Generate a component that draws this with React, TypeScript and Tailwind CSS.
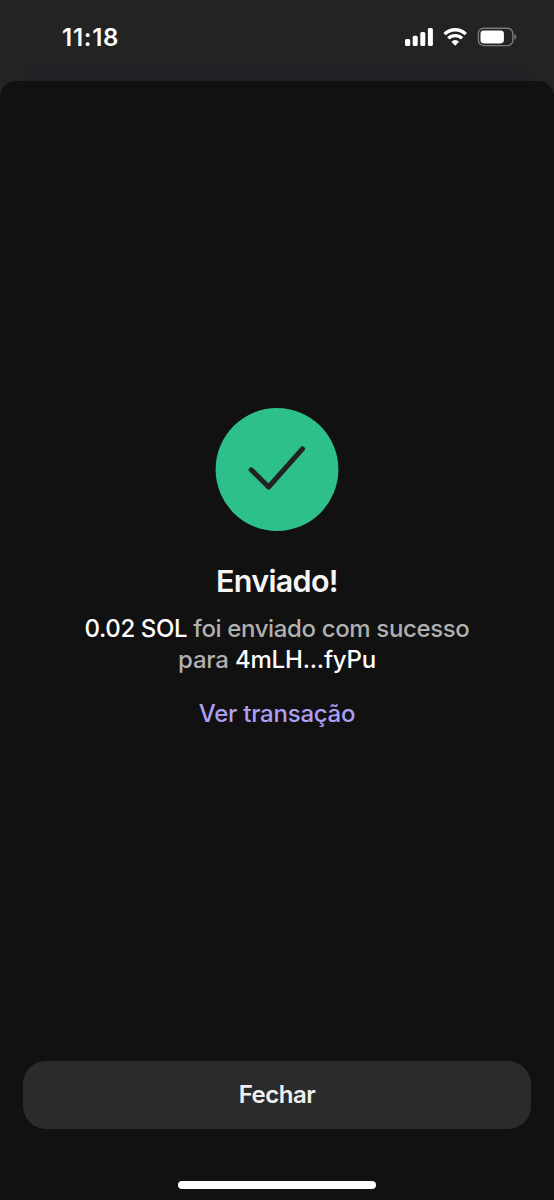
const SignalIcon = () => (
  <svg width="30" height="20" viewBox="0 0 30 20" fill="#fff">
    <rect x="1" y="11.9" width="5.2" height="7" rx="1.5" />
    <rect x="8.7" y="8.8" width="5" height="10.1" rx="1.5" />
    <rect x="16.3" y="4.9" width="5" height="14" rx="1.5" />
    <rect x="23.9" y="1" width="5" height="17.9" rx="1.5" />
  </svg>
);

const WifiIcon = () => (
  <svg width="24" height="20" viewBox="0 0 24 20" fill="none" stroke="#fff" strokeWidth="3.4">
    <path d="M1.6 7.1 A15.2 15.2 0 0 1 22.8 7.1" />
    <path d="M5.4 11.4 A9.6 9.6 0 0 1 19 11.4" />
    <path
      d="M8.4 14.7 A5.3 5.3 0 0 1 16 14.7 L12.7 18.2 Q12.2 18.6 11.7 18.2 Z"
      fill="#fff"
      stroke="none"
    />
  </svg>
);

const BatteryIcon = () => (
  <svg width="40" height="20" viewBox="0 0 40 20" fill="none">
    <rect x="1.4" y="1.2" width="34.4" height="17.4" rx="5.2" stroke="#7b7b7b" strokeWidth="1.4" />
    <rect x="3.5" y="3.4" width="23.4" height="13" rx="3.3" fill="#fff" />
    <path d="M37.4 7 Q39.4 8 39.4 9.9 Q39.4 11.8 37.4 12.8 Z" fill="#7b7b7b" />
  </svg>
);

const StatusBar = () => (
  <div className="flex h-[67px] items-start justify-between pl-[62px] pr-[37px]">
    <span className="mt-[22px] text-[24px] leading-8 font-semibold tracking-[0.75px] text-white">
      11:18
    </span>
    <div className="mt-[27px] flex items-center">
      <SignalIcon />
      <div className="ml-[9px]">
        <WifiIcon />
      </div>
      <div className="ml-[10px]">
        <BatteryIcon />
      </div>
    </div>
  </div>
);

const App = () => {
  return (
    <div
      className="flex h-[1200px] w-full flex-col overflow-hidden bg-[#232323]"
      style={{ fontFamily: 'Inter, "Liberation Sans", sans-serif' }}
    >
      <StatusBar />

      {/* edge of the sheet underneath */}
      <div className="mx-[23px] h-[14px] shrink-0 rounded-t-[14px] bg-[#202124]" />

      <div className="flex flex-1 flex-col items-center rounded-t-[16px] bg-[#111111] px-[23px]">
        <svg
          className="mt-[326px] shrink-0"
          width="124"
          height="124"
          viewBox="0 0 124 124"
          fill="none"
        >
          <circle cx="62" cy="62.5" r="61.4" fill="#2ec08b" />
          <path
            d="M36.2 62.8 L53.6 80 L87.5 41.8"
            stroke="#222222"
            strokeWidth="5"
            strokeLinecap="round"
            strokeLinejoin="round"
          />
        </svg>

        <h1 className="mt-[30px] text-[30.5px] leading-10 font-semibold tracking-[-0.7px] text-[#f5f5f5]">
          Enviado!
        </h1>
        <p className="mt-[12px] text-center text-[24px] leading-[31px] font-medium tracking-[-0.36px] whitespace-nowrap text-[#b0b0b0]">
          <span className="text-white">0.02 SOL</span> foi enviado com sucesso
          <br />
          <span className="tracking-[-0.2px]">
            para <span className="text-white">4mLH...fyPu</span>
          </span>
        </p>
        <a className="mt-[23px] text-[24px] leading-8 font-medium tracking-[-0.24px] text-[#ab9ff2]">
          Ver transação
        </a>

        <button className="mt-auto h-[68px] w-full rounded-[23px] bg-[#2b2b2b] text-[24px] font-semibold tracking-[-0.5px] text-[#f0f0f0]">
          Fechar
        </button>
        <div className="mt-[52px] mb-[11px] h-[8px] w-[198px] shrink-0 rounded-full bg-white" />
      </div>
    </div>
  );
};

export default App;
